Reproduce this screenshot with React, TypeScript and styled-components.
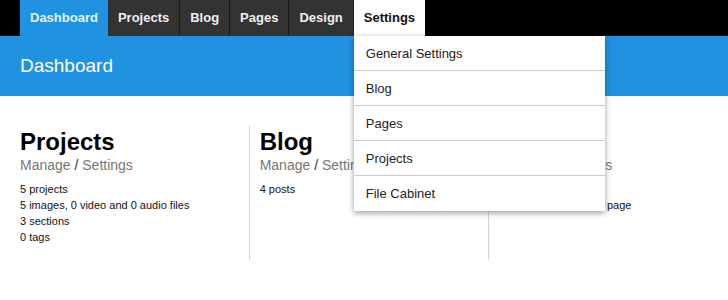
import React from "react";
import styled, { createGlobalStyle } from "styled-components";

const GlobalStyle = createGlobalStyle`
  body {
    margin: 0;
    background: #fff;
    font-family: Arial, "Liberation Sans", Helvetica, sans-serif;
    color: #111;
  }
`;

const tabs = ["Dashboard", "Projects", "Blog", "Pages", "Design", "Settings"];

const settingsMenu = [
  "General Settings",
  "Blog",
  "Pages",
  "Projects",
  "File Cabinet",
];

const sections = [
  { title: "Projects", lines: ["5 projects", "5 images, 0 video and 0 audio files", "3 sections", "0 tags"] },
  { title: "Blog", lines: ["4 posts"] },
  { title: "Pages", lines: ["4 pages", "3 published, 1 hidden page"] },
];

export default function App() {
  return (
    <>
      <GlobalStyle />
      <NavBar>
        {tabs.map((t) => (
          <Tab key={t} variant={t === "Dashboard" ? "active" : t === "Settings" ? "open" : "plain"}>
            {t}
            {t === "Settings" && (
              <Dropdown>
                {settingsMenu.map((m) => (
                  <MenuItem key={m}>{m}</MenuItem>
                ))}
              </Dropdown>
            )}
          </Tab>
        ))}
      </NavBar>
      <Banner>Dashboard</Banner>
      <Columns>
        {sections.map((s, i) => (
          <Column key={s.title} first={i === 0}>
            <Heading>{s.title}</Heading>
            <Links>
              Manage <Slash>/</Slash> Settings
            </Links>
            <Stats>
              {s.lines.map((l) => (
                <li key={l}>{l}</li>
              ))}
            </Stats>
          </Column>
        ))}
      </Columns>
    </>
  );
}

const NavBar = styled.nav`
  display: flex;
  height: 36px;
  padding-left: 20px;
  background: #000;
`;

const tabBg = {
  active: "#1f93e2",
  open: "#fff",
  plain: "#333",
};

const tabColor = {
  active: "#e4f3ff",
  open: "#111",
  plain: "#f0f0f0",
};

const Tab = styled.div<{ variant: "active" | "open" | "plain" }>`
  position: relative;
  display: flex;
  align-items: center;
  padding: 0 10px 2px;
  font-size: 13px;
  font-weight: bold;
  background: ${(p) => tabBg[p.variant]};
  color: ${(p) => tabColor[p.variant]};
  border-right: ${(p) => (p.variant === "plain" ? "1px solid #1a1a1a" : "none")};
  cursor: pointer;
`;

const Dropdown = styled.ul`
  position: absolute;
  top: 100%;
  left: 0;
  z-index: 10;
  width: 251px;
  margin: 0;
  padding: 0;
  list-style: none;
  background: #fff;
  box-shadow: 0 2px 6px rgba(0, 0, 0, 0.4);
`;

const MenuItem = styled.li`
  height: 34px;
  line-height: 35px;
  padding-left: 12px;
  font-size: 13px;
  font-weight: normal;
  color: #222;
  border-bottom: 1px solid #ccc;

  &:last-child {
    border-bottom: none;
    height: 35px;
  }
`;

const Banner = styled.div`
  height: 60px;
  line-height: 60px;
  padding-left: 20px;
  background: #1f93e2;
  color: #fff;
  font-size: 19px;
`;

const Columns = styled.div`
  display: flex;
  padding: 29px 0 0 20px;
`;

const Column = styled.section<{ first: boolean }>`
  box-sizing: border-box;
  width: ${(p) => (p.first ? "229px" : "240px")};
  height: 135px;
  padding: 4px 10px 0 ${(p) => (p.first ? "0" : "10px")};
  border-left: ${(p) => (p.first ? "none" : "1px solid #d4d4d4")};
`;

const Heading = styled.h2`
  margin: 0;
  font-size: 24px;
  line-height: 25px;
  font-weight: bold;
  color: #000;
`;

const Links = styled.div`
  margin-top: 3px;
  font-size: 14px;
  line-height: 17px;
  color: #777;
`;

const Slash = styled.span`
  color: #333;
`;

const Stats = styled.ul`
  margin: 7px 0 0;
  padding: 0;
  list-style: none;
  font-size: 11px;
  line-height: 16px;
  color: #111;
`;
